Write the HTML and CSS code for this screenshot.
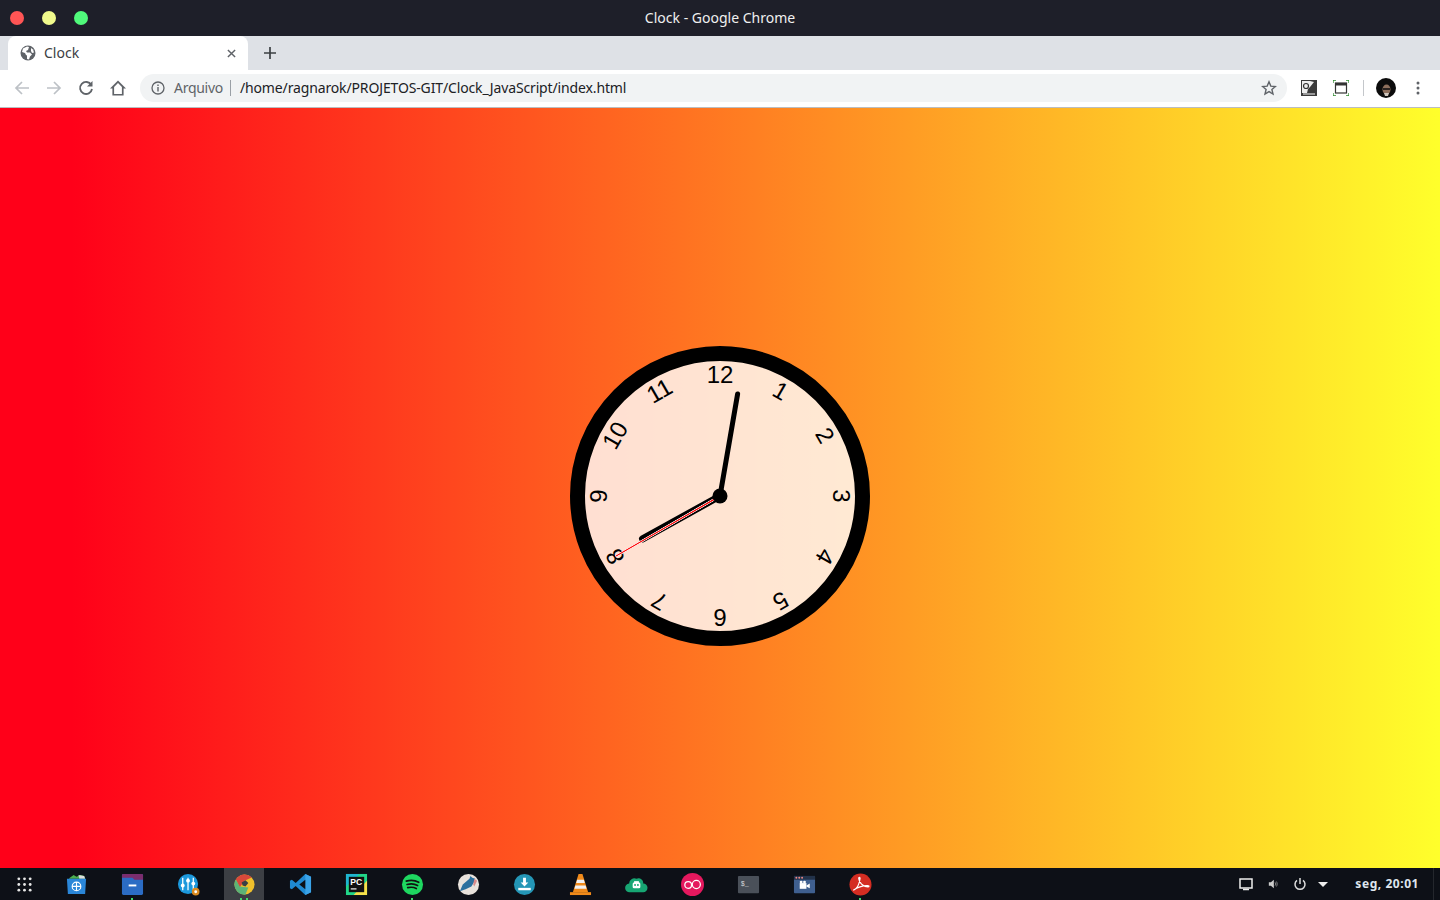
FILE: index.html
```html
<!DOCTYPE html>
<html lang="pt-BR">
<head>
  <meta charset="UTF-8" />
  <title>Clock - Google Chrome</title>
  <link rel="stylesheet" href="styles.css">
</head>
<body>

  <!-- Barra de titulo -->
  <div class="titlebar">
    <div class="lights">
      <span class="light red"></span>
      <span class="light yellow"></span>
      <span class="light green"></span>
    </div>
    <div class="title">Clock - Google Chrome</div>
  </div>

  <!-- Abas -->
  <div class="tabstrip">
    <div class="tab">
      <svg class="tab-icon" viewBox="0 0 16 16"><circle cx="8" cy="8" r="7.5" fill="#5f6368"/><path d="M7 1.500 3 3.500 2 7l3 1 1 2 1 .5V14l2 .5 1-3 2-2-2-2H7L6 6l2-1 1-3z" fill="#fff"/><path d="M11 3l2 1.500 1 3-2 .5-1-2z" fill="#fff"/></svg>
      <span class="tab-label">Clock</span>
      <svg class="tab-close" viewBox="0 0 10 10"><path d="M1 1l8 8M9 1l-8 8" stroke="#5f6368" stroke-width="1.600"/></svg>
    </div>
    <svg class="new-tab" viewBox="0 0 12 12"><path d="M6 0v12M0 6h12" stroke="#3c4043" stroke-width="1.700"/></svg>
  </div>

  <!-- Barra de endereco -->
  <div class="toolbar">
    <svg class="nav" viewBox="0 0 16 16"><path d="M15 8H2M8 2 2 8l6 6" fill="none" stroke="#bdc1c6" stroke-width="1.700"/></svg>
    <svg class="nav" viewBox="0 0 16 16"><path d="M1 8h13M8 2l6 6-6 6" fill="none" stroke="#bdc1c6" stroke-width="1.700"/></svg>
    <svg class="nav" viewBox="0 0 16 16"><path d="M13.300 5A6 6 0 1 0 14 9" fill="none" stroke="#5f6368" stroke-width="1.800"/><path d="M14.500 1v5.500H9z" fill="#5f6368"/></svg>
    <svg class="nav" viewBox="0 0 16 16"><path d="M8 .5 0 8.500h2.400V15.500h11.200V8.500H16zM8 3.100l3.900 3.900v6.900H4.100V7z" fill="#5f6368"/></svg>
    <div class="omnibox">
      <svg class="info" viewBox="0 0 14 14"><circle cx="7" cy="7" r="6" fill="none" stroke="#5f6368" stroke-width="1.300"/><path d="M7 6v4.500M7 3.500v1.400" stroke="#5f6368" stroke-width="1.400"/></svg>
      <span class="scheme">Arquivo</span>
      <span class="omni-sep"></span>
      <span class="url">/home/ragnarok/PROJETOS-GIT/Clock_JavaScript/index.html</span>
      <svg class="star" viewBox="0 0 16 16"><path d="M8 1.800l1.800 4.300 4.600.4-3.500 3 1.100 4.500L8 11.600 4 14l1.100-4.500-3.500-3 4.600-.4z" fill="none" stroke="#5f6368" stroke-width="1.400"/></svg>
    </div>
    <div class="extensions">
      <svg class="ext" viewBox="0 0 16 16"><rect width="16" height="16" fill="#3a3a3a"/><path d="M1 1h8l4 1-4 5-2 2-1 4H1z" fill="#eee"/><circle cx="5" cy="6" r="2.500" fill="none" stroke="#333" stroke-width="1.200"/><rect x="2" y="13" width="12" height="2" fill="#999"/></svg>
      <svg class="ext" viewBox="0 0 16 16"><path d="M0 3V0h3M13 0h3v3M16 13v3h-3M3 16H0v-3" fill="none" stroke="#2e8b2e" stroke-width="1.300"/><rect x="2.500" y="3" width="11" height="10" fill="none" stroke="#333" stroke-width="1.200"/><rect x="2.500" y="3" width="11" height="2.500" fill="#333"/></svg>
      <span class="toolbar-sep"></span>
      <svg class="avatar" viewBox="0 0 20 20"><circle cx="10" cy="10" r="10" fill="#0c0c0c"/><ellipse cx="10.500" cy="11.500" rx="4" ry="5" fill="#8d6f5c"/><path d="M7 10h7v2H7z" fill="#2a2320"/><path d="M8 15h5l-1 3H9z" fill="#cfc6bd"/></svg>
      <svg class="menu" viewBox="0 0 4 14"><circle cx="2" cy="2" r="1.500" fill="#5f6368"/><circle cx="2" cy="7" r="1.500" fill="#5f6368"/><circle cx="2" cy="12" r="1.500" fill="#5f6368"/></svg>
    </div>
  </div>

  <!-- Relogio -->
  <div class="page">
    <div class="clock">
      <div class="hand hour" style="--rotation: 241"></div>
      <div class="hand minute" style="--rotation: 9.8"></div>
      <div class="hand second" style="--rotation: 240"></div>
      <div class="number" style="--rotation: 30">1</div>
      <div class="number" style="--rotation: 60">2</div>
      <div class="number" style="--rotation: 90">3</div>
      <div class="number" style="--rotation: 120">4</div>
      <div class="number" style="--rotation: 150">5</div>
      <div class="number" style="--rotation: 180">6</div>
      <div class="number" style="--rotation: 210">7</div>
      <div class="number" style="--rotation: 240">8</div>
      <div class="number" style="--rotation: 270">9</div>
      <div class="number" style="--rotation: 300">10</div>
      <div class="number" style="--rotation: 330">11</div>
      <div class="number" style="--rotation: 0">12</div>
    </div>
  </div>

  <!-- Painel inferior -->
  <div class="taskbar">
    <div class="launcher">
      <div class="slot">
        <svg viewBox="0 0 18 18"><g fill="#e6e6e6"><circle cx="3" cy="3" r="1.500"/><circle cx="9" cy="3" r="1.500"/><circle cx="15" cy="3" r="1.500"/><circle cx="3" cy="9" r="1.500"/><circle cx="9" cy="9" r="1.500"/><circle cx="15" cy="9" r="1.500"/><circle cx="3" cy="15" r="1.500"/><circle cx="9" cy="15" r="1.500"/><circle cx="15" cy="15" r="1.500"/></g></svg>
      </div>
      <div class="slot">
        <svg viewBox="0 0 24 24"><path d="M5 5l4-3 3 2 4-2 4 1 1 3H4z" fill="#4caf50"/><path d="M14 2l6 1 1 3h-6z" fill="#ddd"/><path d="M2 6h20l-1 16H3z" fill="#2a86d8"/><circle cx="12" cy="14" r="4.500" fill="none" stroke="#fff" stroke-width="1.200"/><path d="M12 9.500v9M7.500 14h9" stroke="#fff" stroke-width="1.200"/></svg>
      </div>
      <div class="slot running">
        <svg viewBox="0 0 24 24"><rect x="1" y="1" width="22" height="22" rx="1.500" fill="#2b6cc4"/><path d="M1 2.500A1.500 1.500 0 0 1 2.500 1h19A1.500 1.500 0 0 1 23 2.500V7H14l-2-2H1z" fill="#7b2d6e"/><rect x="8" y="12" width="8" height="2" fill="#fff"/></svg>
      </div>
      <div class="slot">
        <svg viewBox="0 0 24 24"><circle cx="11.500" cy="11.500" r="10.500" fill="#1b98dc"/><path d="M6 5v13M11.500 5v13M17 5v13" stroke="#fff" stroke-width="1.300"/><circle cx="6" cy="13" r="2" fill="#fff"/><circle cx="11.500" cy="8" r="2" fill="#fff"/><circle cx="17" cy="11" r="2" fill="#fff"/><circle cx="19.500" cy="19.500" r="4" fill="#d98a1f"/><circle cx="19.500" cy="19.500" r="1.500" fill="#fff"/></svg>
      </div>
      <div class="slot active">
        <svg viewBox="0 0 24 24"><circle cx="12" cy="12" r="10.500" fill="#efc02c"/><path d="M2.900 6.800A10.500 10.500 0 0 1 19.500 4.700L12 8 7 15z" fill="#d9483b"/><path d="M2.900 6.800 7 14l6 8.400A10.500 10.500 0 0 1 2.900 6.800z" fill="#5cb377"/><path d="M7 14l9 1-3 7.400a10.500 10.500 0 0 1-2 .1z" fill="#5cb377"/><path d="M9 10l4-2.500 3 3-3 3.500-3-1z" fill="#3a3f45"/></svg>
        <span class="dots"><i></i><i></i></span>
      </div>
      <div class="slot">
        <svg viewBox="0 0 24 24"><path d="M17 1l6 3v16l-6 3L7 13.500 3 17l-2-1V8l2-1 4 3.500z" fill="#1f8ad2"/><path d="M17 1l6 3v16l-6 3z" fill="#3aa3e8"/><path d="M17 7 10.800 12 17 17z" fill="#0d1117"/></svg>
      </div>
      <div class="slot">
        <svg viewBox="0 0 24 24"><path d="M1 1h22v22H1z" fill="#21d789"/><path d="M1 1h14L1 14z" fill="#1fb6d1"/><path d="M23 8v15H9z" fill="#f5e14a"/><rect x="4" y="4" width="16" height="16" fill="#111"/><text class="pc-text" x="5.500" y="12">PC</text><rect x="6" y="16" width="6" height="1.200" fill="#fff"/></svg>
      </div>
      <div class="slot running">
        <svg viewBox="0 0 24 24"><circle cx="12" cy="12" r="11" fill="#1ed760"/><path d="M5.500 8.500c4.500-1.300 9-1 13 1.200M6.300 12c3.800-1 7.800-.8 11 1.100M7 15.300c3.200-.8 6.300-.6 9 .9" fill="none" stroke="#111" stroke-width="1.700" stroke-linecap="round"/></svg>
      </div>
      <div class="slot">
        <svg viewBox="0 0 24 24"><circle cx="12" cy="12" r="11" fill="#e8e2dc"/><path d="M3 19l3-7 7-6 1-3 2 2 3 1-1 3-3 5-6 3z" fill="#2a6f9e"/><path d="M18 6l3 2-3 6-1-2z" fill="#d88a8a"/></svg>
      </div>
      <div class="slot">
        <svg viewBox="0 0 24 24"><circle cx="12" cy="12" r="11" fill="#2496b6"/><path d="M10.500 5h3v5H16l-4 4-4-4h2.500z" fill="#fff"/><rect x="5.500" y="15.500" width="13" height="2.500" fill="#fff"/></svg>
      </div>
      <div class="slot">
        <svg viewBox="0 0 24 24"><path d="M10 1h4l6 19H4z" fill="#f08a1a"/><path d="M8.500 7h7l1 3.500h-9zM6.700 13h10.600l1 3.500H5.700z" fill="#f2f2f2"/><path d="M1 20h22v3H1z" fill="#f08a1a"/></svg>
      </div>
      <div class="slot">
        <svg viewBox="0 0 24 24"><path d="M5 20a4.500 4.500 0 0 1-.7-9A5.500 5.500 0 0 1 12 6a5 5 0 0 1 7 5 4.500 4.500 0 0 1 0 9z" fill="#17a673"/><rect x="8" y="10" width="8" height="6" rx="1.500" fill="#fff"/><rect x="9.500" y="8.500" width="5" height="2" fill="#fff"/><circle cx="10.500" cy="12.500" r="1" fill="#17a673"/><circle cx="13.500" cy="12.500" r="1" fill="#17a673"/></svg>
      </div>
      <div class="slot">
        <svg viewBox="0 0 24 24"><circle cx="12" cy="12" r="12" fill="#e5185e"/><circle cx="7.500" cy="12.500" r="3.500" fill="none" stroke="#fff" stroke-width="1.300"/><circle cx="16" cy="12" r="4.200" fill="none" stroke="#fff" stroke-width="1.300"/></svg>
      </div>
      <div class="slot">
        <svg viewBox="0 0 24 24"><rect x="1" y="3" width="22" height="18" rx="1" fill="#4a5059"/><text class="term-text" x="4" y="14">$_</text></svg>
      </div>
      <div class="slot">
        <svg viewBox="0 0 24 24"><rect x="1" y="3" width="22" height="18" rx="1" fill="#3f5f8f"/><rect x="1" y="3" width="22" height="4" fill="#22324a"/><g fill="#e88"><circle cx="3.500" cy="5" r="1"/><circle cx="6.500" cy="5" r="1"/><circle cx="9.500" cy="5" r="1"/></g><rect x="7" y="10.500" width="7" height="6" fill="#fff"/><circle cx="8.500" cy="9.500" r="1.500" fill="#fff"/><circle cx="12" cy="9.500" r="1.500" fill="#fff"/><path d="M14 13l3.500-2v5L14 14z" fill="#fff"/></svg>
      </div>
      <div class="slot running">
        <svg viewBox="0 0 24 24"><circle cx="12" cy="12" r="11.500" fill="#d42d22"/><path d="M4.500 18c3-1 6-5 7-12 .3-2-1.500-2-1.300 0 .5 4 4 8 9.500 8.500 1.500 0 1.500-1.400 0-1.400-5-.2-10.500 1.500-15.200 4.900z" fill="none" stroke="#fff" stroke-width="1.300"/></svg>
      </div>
    </div>
    <div class="tray">
      <svg class="tray-icon" viewBox="0 0 14 14"><path d="M1 2h12v9H1z" fill="none" stroke="#eee" stroke-width="1.500"/><path d="M4 12.500h6" stroke="#eee" stroke-width="1.500"/></svg>
      <svg class="tray-icon vol" viewBox="0 0 12 12"><path d="M1 4h2.500L7 1v10L3.500 8H1z" fill="#ccc"/><path d="M8.500 4c.8 1 .8 3 0 4M10 3c1.300 1.500 1.300 4.500 0 6" fill="none" stroke="#999" stroke-width="1"/></svg>
      <svg class="tray-icon power" viewBox="0 0 14 14"><path d="M4 3.300a5 5 0 1 0 6 0M7 1v6" fill="none" stroke="#ddd" stroke-width="1.500"/></svg>
      <span class="tray-arrow"></span>
      <span class="tray-clock">seg, 20:01</span>
      <span class="tray-end"></span>
    </div>
  </div>

</body>
</html>
```
FILE: styles.css
```css
* {
  box-sizing: border-box;
}

html, body {
  height: 100%;
}

body {
  margin: 0;
  display: flex;
  flex-direction: column;
  height: 900px;
  overflow: hidden;
  font-family: "Noto Sans", "Open Sans", sans-serif;
}

/* Barra de titulo */
.titlebar {
  height: 36px;
  background-color: #1e1f29;
  display: flex;
  align-items: center;
  justify-content: center;
  padding-bottom: 2px;
  position: relative;
}

.lights {
  position: absolute;
  left: 10px;
  top: 11px;
  display: flex;
  gap: 18px;
}

.light {
  width: 14px;
  height: 14px;
  border-radius: 50%;
}

.red { background-color: #ff5555; }
.yellow { background-color: #f1fa8c; }
.green { background-color: #50fa7b; }

.title {
  color: #f0f0f0;
  font-size: 14px;
}

/* Abas */
.tabstrip {
  height: 34px;
  background-color: #dee1e6;
  display: flex;
  align-items: center;
  padding-left: 8px;
}

.tab {
  width: 240px;
  height: 34px;
  background-color: white;
  border-radius: 8px 8px 0 0;
  display: flex;
  align-items: center;
  padding: 0 12px;
  color: #3c4043;
  font-size: 14px;
}

.tab-icon {
  width: 16px;
  height: 16px;
  margin-right: 8px;
}

.tab-label {
  flex: 1;
  padding-bottom: 2px;
}

.tab-close {
  width: 9px;
  height: 9px;
}

.new-tab {
  width: 12px;
  height: 12px;
  margin-left: 16px;
}

/* Barra de endereco */
.toolbar {
  height: 38px;
  background-color: white;
  border-bottom: 1px solid #bbbdc0;
  display: flex;
  align-items: center;
  padding: 0 0 1px 14px;
}

.nav {
  width: 16px;
  height: 16px;
  margin-right: 16px;
}

.omnibox {
  width: 1147px;
  height: 28px;
  margin-left: -2px;
  background-color: #f1f3f4;
  border-radius: 14px;
  display: flex;
  align-items: center;
  padding: 0 10px 0 11px;
  font-size: 14px;
}

.info {
  width: 14px;
  height: 14px;
  margin-right: 9px;
}

.scheme {
  color: #5f6368;
  letter-spacing: -0.28px;
  padding-bottom: 2px;
}

.omni-sep {
  width: 1px;
  height: 16px;
  background-color: #9aa0a6;
  margin: 0 9px 0 7px;
}

.url {
  flex: 1;
  color: #202124;
  letter-spacing: -0.14px;
  padding-bottom: 2px;
}

.star {
  width: 16px;
  height: 16px;
}

.extensions {
  display: flex;
  align-items: center;
  flex: 1;
  padding-left: 14px;
}

.ext {
  width: 16px;
  height: 16px;
  margin-right: 16px;
}

.toolbar-sep {
  width: 1px;
  height: 16px;
  background-color: #c4c7cb;
  margin: 0 12px 0 -2px;
}

.avatar {
  width: 20px;
  height: 20px;
  margin-right: 20px;
}

.menu {
  width: 4px;
  height: 14px;
}

/* Relogio */
.page {
  flex: 1;
  min-height: 0;
  background-image: linear-gradient(to right, #ff0019 5%, #ffff2b);
  display: flex;
  align-items: center;
  justify-content: center;
  padding-top: 16px;
}

.clock {
  width: 300px;
  height: 300px;
  background-color: rgba(255, 255, 255, .8);
  border-radius: 50%;
  border: 15px solid black;
  position: relative;
}

.clock::after {
  content: '';
  position: absolute;
  width: 15px;
  height: 15px;
  left: 50%;
  top: 50%;
  transform: translate(-50%, -50%);
  background-color: black;
  border-radius: 50%;
  z-index: 11;
}

.number {
  position: absolute;
  width: 100%;
  height: 100%;
  text-align: center;
  font-family: "Liberation Sans", Arial, sans-serif;
  font-size: 24px;
  transform: rotate(calc(var(--rotation) * 1deg));
}

.hand {
  position: absolute;
  left: 50%;
  bottom: 50%;
  transform-origin: bottom;
  transform: translateX(-50%) rotate(calc(var(--rotation) * 1deg));
  border-radius: 10px 10px 0 0;
  background-color: black;
  z-index: 10;
}

.hand.second {
  width: 3px;
  height: 121px;
  background-color: red;
  border: 1px solid white;
  border-top: none;
  border-bottom: none;
}

.hand.minute {
  width: 5px;
  height: 106px;
}

.hand.hour {
  width: 7px;
  height: 92px;
}

/* Painel inferior */
.taskbar {
  height: 32px;
  background-color: #0d1017;
  display: flex;
  align-items: center;
  justify-content: space-between;
}

.launcher {
  display: flex;
}

.slot {
  width: 40px;
  height: 32px;
  margin-left: 16px;
  display: flex;
  align-items: center;
  justify-content: center;
  position: relative;
}

.slot:first-child {
  width: 32px;
  margin-left: 8px;
}

.slot svg {
  width: 23px;
  height: 23px;
}

.slot:first-child svg {
  width: 17px;
  height: 17px;
}

.slot.active {
  background-color: #3c3f44;
}

.slot.running::after {
  content: '';
  position: absolute;
  left: 19px;
  bottom: 0;
  width: 2px;
  height: 2px;
  background-color: #3fdc6a;
}

.dots {
  position: absolute;
  bottom: 0;
  left: 16px;
  display: flex;
  gap: 4px;
}

.dots i {
  width: 2px;
  height: 2px;
  background-color: #3fdc6a;
}

.pc-text {
  font-family: "Liberation Sans", sans-serif;
  font-size: 9px;
  font-weight: bold;
  fill: white;
}

.term-text {
  font-family: "Liberation Mono", monospace;
  font-size: 7px;
  fill: #d8d8d8;
}

.tray {
  display: flex;
  align-items: center;
  align-self: stretch;
  color: #dfe6ee;
  font-size: 12px;
  font-weight: bold;
}

.tray-icon {
  width: 14px;
  height: 14px;
  margin-right: 15px;
}

.tray-icon.vol {
  width: 10px;
  height: 10px;
}

.tray-icon.power {
  margin-right: 11px;
}

.tray-arrow {
  width: 0;
  height: 0;
  border-left: 5px solid transparent;
  border-right: 5px solid transparent;
  border-top: 5px solid #eee;
  margin-right: 27px;
}

.tray-clock {
  letter-spacing: 0.55px;
  padding-bottom: 2px;
}

.tray-end {
  width: 1px;
  height: 100%;
  background-color: #24272d;
  margin: 0 6px 0 14px;
}
```
